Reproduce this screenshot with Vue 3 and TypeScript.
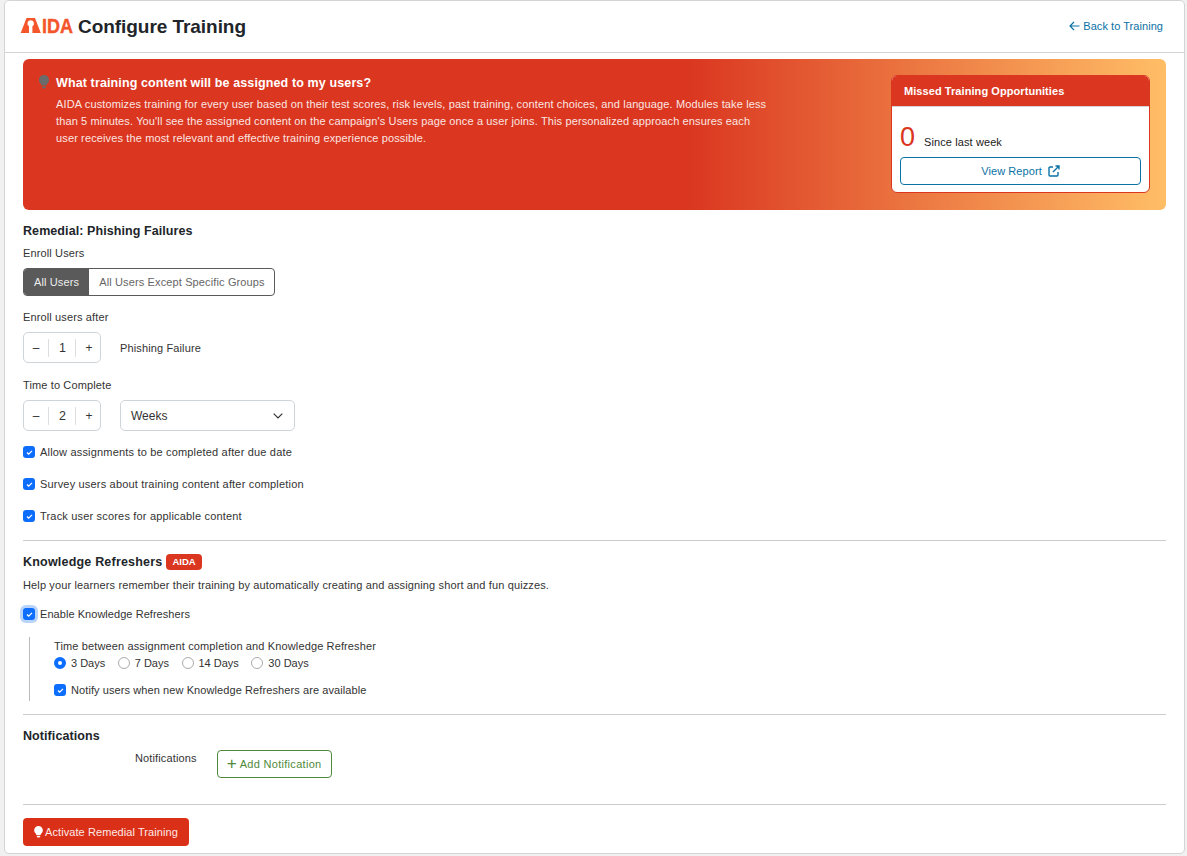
<script setup lang="ts">
const checks: string[] = [
  'Allow assignments to be completed after due date',
  'Survey users about training content after completion',
  'Track user scores for applicable content'
]
const days: string[] = ['3 Days', '7 Days', '14 Days', '30 Days']
</script>

<template>
  <div class="page">
    <div class="card">
      <header class="head">
        <div class="brand">
          <svg class="logo" width="55" height="26" viewBox="0 -4 55 26">
            <path d="M.7 15 L6.5 0 H15 L20.8 15 Z" fill="#f4552b" />
            <path d="M10.7 2.2 a3.3 3.3 0 0 1 1.7 6.1 V15 H9 V8.3 A3.3 3.3 0 0 1 10.7 2.2 Z" fill="#fff" />
            <text x="22" y="15" class="logo-text" textLength="31" lengthAdjust="spacingAndGlyphs">IDA</text>
          </svg>
          <h1 class="title">Configure Training</h1>
        </div>
        <a class="back">
          <svg width="11" height="10" viewBox="0 0 11 10"><path d="M5 1 L1 5 L5 9 M1 5 H10.5" fill="none" stroke="#0a72a5" stroke-width="1.2" /></svg>
          Back to Training
        </a>
      </header>

      <div class="body">
        <section class="banner">
          <div class="info">
            <svg class="bulb" width="10" height="14" viewBox="0 0 10 14">
              <path d="M5 0 a5 5 0 0 1 3 9 l-.5 1.5 h-5 L2 9 A5 5 0 0 1 5 0 Z M3 11.5 h4 v1 l-1 1 h-2 l-1 -1 Z" fill="#6b6b6b" />
            </svg>
            <div>
              <h2 class="info-title">What training content will be assigned to my users?</h2>
              <p class="info-text">AIDA customizes training for every user based on their test scores, risk levels, past training, content choices, and language. Modules take less than 5 minutes. You'll see the assigned content on the campaign's Users page once a user joins. This personalized approach ensures each user receives the most relevant and effective training experience possible.</p>
            </div>
          </div>
          <aside class="missed">
            <div class="missed-head">Missed Training Opportunities</div>
            <div class="missed-body">
              <div class="stat"><span class="num">0</span><span class="since">Since last week</span></div>
              <button class="report">
                View Report
                <svg width="12" height="12" viewBox="0 0 12 12"><path d="M5 2 H2 a1 1 0 0 0 -1 1 v7 a1 1 0 0 0 1 1 h7 a1 1 0 0 0 1 -1 V7 M5 7 L11 1 M7.5 1 H11 V4.5" fill="none" stroke="#0a72a5" stroke-width="1.4" /></svg>
              </button>
            </div>
          </aside>
        </section>

        <h3 class="h3 first">Remedial: Phishing Failures</h3>
        <div class="lbl enroll">Enroll Users</div>
        <div class="seg">
          <span class="seg-on">All Users</span>
          <span class="seg-off">All Users Except Specific Groups</span>
        </div>

        <div class="lbl after">Enroll users after</div>
        <div class="row">
          <div class="stepper"><span>–</span><b>1</b><span class="inc">+</span></div>
          <span class="lbl">Phishing Failure</span>
        </div>

        <div class="lbl complete">Time to Complete</div>
        <div class="row">
          <div class="stepper"><span>–</span><b>2</b><span class="inc">+</span></div>
          <div class="select">
            <span>Weeks</span>
            <svg width="10" height="6" viewBox="0 0 10 6"><path d="M.7 .7 L5 5 L9.3 .7" fill="none" stroke="#333" stroke-width="1.2" /></svg>
          </div>
        </div>

        <div class="checks">
          <label v-for="c in checks" :key="c" class="check wide">
            <span class="box"><svg width="7" height="5" viewBox="0 0 8 6"><path d="M1 3 L3 5 L7 1" fill="none" stroke="#fff" stroke-width="1.5" /></svg></span>
            {{ c }}
          </label>
        </div>

        <hr class="rule r1" />

        <div class="kr-head">
          <h3 class="h3 kr">Knowledge Refreshers</h3>
          <span class="badge">AIDA</span>
        </div>
        <p class="lbl help">Help your learners remember their training by automatically creating and assigning short and fun quizzes.</p>
        <label class="check enable">
          <span class="box focus"><svg width="7" height="5" viewBox="0 0 8 6"><path d="M1 3 L3 5 L7 1" fill="none" stroke="#fff" stroke-width="1.5" /></svg></span>
          Enable Knowledge Refreshers
        </label>

        <div class="indent">
          <div class="lbl">Time between assignment completion and Knowledge Refresher</div>
          <div class="radios">
            <label v-for="(d, i) in days" :key="d" class="radio">
              <span class="dot" :class="{ on: i === 0 }"></span>{{ d }}
            </label>
          </div>
          <label class="check notify">
            <span class="box"><svg width="7" height="5" viewBox="0 0 8 6"><path d="M1 3 L3 5 L7 1" fill="none" stroke="#fff" stroke-width="1.5" /></svg></span>
            Notify users when new Knowledge Refreshers are available
          </label>
        </div>

        <hr class="rule r2" />

        <h3 class="h3">Notifications</h3>
        <div class="notif">
          <span class="lbl notif-lbl">Notifications</span>
          <button class="add"><span class="plus">+</span> Add Notification</button>
        </div>

        <hr class="rule r3" />

        <button class="activate">
          <svg width="9" height="12" viewBox="0 0 10 14">
            <path d="M5 0 a5 5 0 0 1 3 9 l-.5 1.5 h-5 L2 9 A5 5 0 0 1 5 0 Z M3 11.5 h4 v1 l-1 1 h-2 l-1 -1 Z" fill="#fff" />
          </svg>
          Activate Remedial Training
        </button>
      </div>
    </div>
  </div>
</template>

<style>
html, body { margin: 0; background: #f1f1f1; }
</style>

<style scoped>
.page {
  width: 1187px;
  height: 856px;
  padding: 0 2px 0 4px;
  box-sizing: border-box;
  overflow: hidden;
  font-family: "Liberation Sans", Arial, sans-serif;
  font-size: 11px;
  color: #333;
}
.card {
  height: 854px;
  box-sizing: border-box;
  background: #fff;
  border: 1px solid #d4d4d4;
  border-radius: 5px;
}
.head {
  height: 52px;
  box-sizing: border-box;
  border-bottom: 1px solid #d4d4d4;
  display: flex;
  align-items: center;
  justify-content: space-between;
  padding: 0 21px 0 15px;
}
.brand { display: flex; align-items: center; gap: 3px; }
.logo { display: block; }
.logo-text { font: 700 21px "Liberation Sans", Arial, sans-serif; fill: #f4552b; stroke: #f4552b; stroke-width: .4px; }
.title { margin: 0; font-size: 19px; font-weight: 700; color: #212529; letter-spacing: -0.05px; }
.back { color: #0a72a5; font-size: 11px; letter-spacing: .05px; display: flex; align-items: center; gap: 3px; padding-bottom: 2px; }
.body { padding: 6px 18px 0; }
.banner {
  height: 151px;
  box-sizing: border-box;
  border-radius: 6px;
  background: linear-gradient(90deg, #da3620 0%, #da3620 58%, #ffbe66 100%);
  display: flex;
  justify-content: space-between;
  padding: 16px 16px 17px 16px;
}
.info { display: flex; gap: 7px; width: 735px; color: #fff; }
.bulb { flex: none; }
.info-title { margin: 0 0 5px; font-size: 12.5px; font-weight: 700; line-height: 16px; letter-spacing: .12px; }
.info-text { margin: 0; font-size: 11px; letter-spacing: .13px; line-height: 17px; color: #fbe6e2; }
.missed {
  width: 259px;
  box-sizing: border-box;
  border: 1px solid #da3620;
  border-radius: 6px;
  background: #fff;
  overflow: hidden;
}
.missed-head {
  height: 31px;
  background: #da3620;
  color: #fff;
  font-weight: 700;
  font-size: 11px;
  letter-spacing: .07px;
  line-height: 31px;
  padding-left: 12px;
  border-bottom: 1px solid #d4d4d4;
  box-sizing: border-box;
}
.missed-body { padding: 15px 8px 0; }
.stat { display: flex; align-items: flex-end; gap: 9px; height: 35px; box-sizing: border-box; padding-bottom: 5px; }
.num { font-size: 27px; line-height: 30px; color: #da3620; }
.since { font-size: 11px; letter-spacing: .1px; color: #222; line-height: 16px; margin-bottom: 2px; }
.report {
  width: 241px;
  height: 28px;
  border: 1px solid #0a72a5;
  border-radius: 4px;
  background: #fff;
  color: #0a72a5;
  font: 11px "Liberation Sans", Arial, sans-serif;
  letter-spacing: .08px;
  display: flex;
  align-items: center;
  justify-content: center;
  gap: 6px;
  padding: 0;
}
.h3 { margin: 0; font-size: 12.5px; font-weight: 700; color: #212529; line-height: 16px; letter-spacing: .08px; }
.kr { letter-spacing: .2px; }
.first { margin-top: 13px; }
.lbl { font-size: 11px; letter-spacing: .13px; color: #333; line-height: 14px; }
.enroll { margin-top: 7px; }
.seg {
  display: inline-flex;
  margin-top: 8px;
  height: 28px;
  box-sizing: border-box;
  border: 1px solid #5a5a5a;
  border-radius: 4px;
  overflow: hidden;
  font-size: 11px;
  letter-spacing: .13px;
  line-height: 26px;
  vertical-align: top;
}
.seg-on { background: #5a5a5a; color: #eee; padding: 0 10px; }
.seg-off { color: #666; padding: 0 9px 0 10px; }
.after { margin-top: 14px; }
.row { display: flex; align-items: center; gap: 19px; margin-top: 8px; }
.stepper {
  width: 78px;
  height: 31px;
  box-sizing: border-box;
  border: 1px solid #cfd4d8;
  border-radius: 5px;
  display: grid;
  grid-template-columns: 24px 28px 24px;
  align-items: center;
  text-align: center;
  font-size: 12px;
}
.stepper b { font-weight: 400; border-left: 1px solid #dcdfe2; border-right: 1px solid #dcdfe2; line-height: 18px; font-size: 12.5px; padding-left: 1px; }
.inc { padding-left: 2px; }
.complete { margin-top: 15px; }
.select {
  width: 175px;
  height: 31px;
  box-sizing: border-box;
  border: 1px solid #cfd4d8;
  border-radius: 5px;
  display: flex;
  align-items: center;
  justify-content: space-between;
  padding: 0 11px 0 10px;
  font-size: 12px;
}
.checks { margin-top: 14px; display: flex; flex-direction: column; gap: 18px; }
.check { display: flex; align-items: center; gap: 5px; font-size: 11px; line-height: 14px; color: #333; }
.wide { letter-spacing: .18px; }
.box {
  width: 12px;
  height: 12px;
  border-radius: 3px;
  background: #0d6efd;
  display: flex;
  align-items: center;
  justify-content: center;
  flex: none;
}
.focus { box-shadow: 0 0 0 3px #b9d4fb; }
.rule { border: 0; border-top: 1px solid #ccc; margin: 0; }
.r1 { margin-top: 17px; }
.kr-head { display: flex; align-items: center; gap: 4px; margin-top: 13px; }
.badge {
  background: #da3620;
  color: #fff;
  font-weight: 700;
  font-size: 9.5px;
  line-height: 16px;
  border-radius: 4px;
  padding: 0 6px;
}
.help { margin: 8px 0 0; }
.enable { margin-top: 15px; letter-spacing: .05px; }
.indent {
  margin: 16px 0 0 6px;
  border-left: 1px solid #bbb;
  padding: 2px 0 0 24px;
  height: 64px;
  box-sizing: border-box;
}
.radios { display: flex; gap: 12.5px; margin-top: 3px; }
.radio { display: flex; align-items: center; gap: 5px; font-size: 11px; letter-spacing: 0; line-height: 14px; }
.dot {
  width: 12px;
  height: 12px;
  box-sizing: border-box;
  border: 1px solid #aaa;
  border-radius: 50%;
}
.dot.on { border: 4px solid #0d6efd; }
.notify { margin-top: 13px; letter-spacing: .09px; }
.r2 { margin-top: 13px; }
.r2 + .h3 { margin-top: 13px; }
.notif { display: flex; align-items: flex-start; margin-top: 6px; padding-left: 112px; gap: 20px; }
.notif-lbl { margin-top: 1px; }
.add {
  height: 28px;
  width: 115px;
  box-sizing: border-box;
  border: 1px solid #4f8a3c;
  border-radius: 4px;
  background: #fff;
  color: #4f8a3c;
  font: 11px "Liberation Sans", Arial, sans-serif;
  letter-spacing: .3px;
  padding: 0;
}
.plus { font-size: 17px; line-height: 10px; vertical-align: -1px; }
.r3 { margin-top: 26px; }
.activate {
  margin-top: 13px;
  height: 28px;
  width: 166px;
  border: 0;
  border-radius: 4px;
  background: #da3018;
  color: #fde9e5;
  font: 11px "Liberation Sans", Arial, sans-serif;
  letter-spacing: .08px;
  display: flex;
  align-items: center;
  justify-content: center;
  gap: 2px;
  padding: 0;
}
</style>
